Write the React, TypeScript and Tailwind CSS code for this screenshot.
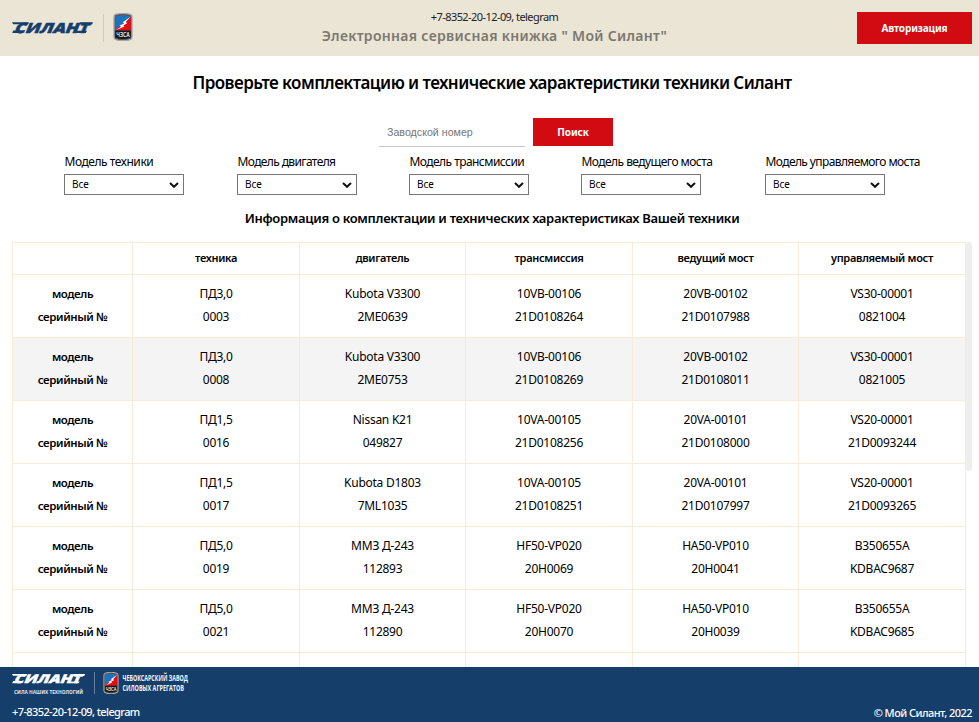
import React from 'react';

const columns = ['техника', 'двигатель', 'трансмиссия', 'ведущий мост', 'управляемый мост'];

const machines: [string, string][][] = [
  [['ПД3,0', '0003'], ['Kubota V3300', '2ME0639'], ['10VB-00106', '21D0108264'], ['20VB-00102', '21D0107988'], ['VS30-00001', '0821004']],
  [['ПД3,0', '0008'], ['Kubota V3300', '2ME0753'], ['10VB-00106', '21D0108269'], ['20VB-00102', '21D0108011'], ['VS30-00001', '0821005']],
  [['ПД1,5', '0016'], ['Nissan K21', '049827'], ['10VA-00105', '21D0108256'], ['20VA-00101', '21D0108000'], ['VS20-00001', '21D0093244']],
  [['ПД1,5', '0017'], ['Kubota D1803', '7ML1035'], ['10VA-00105', '21D0108251'], ['20VA-00101', '21D0107997'], ['VS20-00001', '21D0093265']],
  [['ПД5,0', '0019'], ['ММЗ Д-243', '112893'], ['HF50-VP020', '20H0069'], ['HA50-VP010', '20H0041'], ['B350655A', 'KDBAC9687']],
  [['ПД5,0', '0021'], ['ММЗ Д-243', '112890'], ['HF50-VP020', '20H0070'], ['HA50-VP010', '20H0039'], ['B350655A', 'KDBAC9685']],
];

const filters = [
  { label: 'Модель техники', width: 'w-[173px]', tracking: 'tracking-[-0.45px]' },
  { label: 'Модель двигателя', width: 'w-[172px]', tracking: 'tracking-[-0.62px]' },
  { label: 'Модель трансмиссии', width: 'w-[172px]', tracking: 'tracking-[-0.55px]' },
  { label: 'Модель ведущего моста', width: 'w-[184px]', tracking: 'tracking-[-0.55px]' },
  { label: 'Модель управляемого моста', width: 'w-[156px]', tracking: 'tracking-[-0.6px]' },
];

function Badge({ className }: { className: string }) {
  return (
    <svg viewBox="0 0 20 28" className={className}>
      <path d="M3.500 1.200Q10-.6 16.500 1.200Q19 1.500 19 4V24Q19 26.300 16.500 26.800Q10 28.600 3.500 26.800Q1 26.300 1 24V4Q1 1.500 3.500 1.200Z" fill="#555" stroke="#a5a8a8" strokeWidth="1.300" />
      <path d="M2.200 3.500Q10 .8 17.800 3.500V17.500H2.200Z" fill="#e30b17" />
      <path d="M2.200 3.500Q10 .8 17.800 3.500L2.200 17Z" fill="#1975bd" />
      <path d="M17.800 3.500L9.800 9.300L11.200 10.300L6.500 12.700L8 13.700L2.200 17.500L11.500 13.500L10.200 12.500L14.200 10.300L12.800 9.100Z" fill="#fff" />
      <path d="M2.200 17.500H17.800V24.500Q10 27.700 2.200 24.500Z" fill="#171918" />
      <text x="3.200" y="23.700" textLength="13.600" lengthAdjust="spacingAndGlyphs" fill="#fff" className="font-['Open_Sans',sans-serif] text-[6.500px] font-semibold">ЧЗСА</text>
    </svg>
  );
}

function Silant({ className }: { className: string }) {
  return (
    <svg viewBox="0 0 82 14" preserveAspectRatio="none" overflow="visible" className={className}>
      <g fill="currentColor" stroke="currentColor">
        <text x="0" y="0" transform="translate(1.500 11.600) skewX(-22)" textLength="74" lengthAdjust="spacingAndGlyphs" strokeWidth="0.500" className="font-['Open_Sans',sans-serif] text-[14px] font-extrabold">СИЛАНТ</text>
        <path d="M0 1.200H17L16 3.300H1.200Z M68 1.200H81L80 3.600H67Z M1.200 9.400H12L10.500 11.900H.3Z M65 9.800H75L73.800 11.900H64Z" strokeWidth="0" />
      </g>
    </svg>
  );
}

function Filter({ label, width, tracking }: { label: string; width: string; tracking: string }) {
  return (
    <div className={width}>
      <div className={`h-[18px] whitespace-nowrap pl-[0.5px] text-[12px] leading-[18px] ${tracking}`}>{label}</div>
      <div className="mt-[3px] flex h-[21px] w-[120px] items-center justify-between border border-[#767676] bg-white pl-[7px] pr-[4px] text-[10px] tracking-[-0.1px]">
        <span>Все</span>
        <svg viewBox="0 0 10 6" className="h-[6px] w-[10px]"><path d="M1 1L5 4.800L9 1" fill="none" stroke="#101010" strokeWidth="2" /></svg>
      </div>
    </div>
  );
}

export default function App() {
  return (
    <div className="flex h-[722px] w-[979px] flex-col overflow-hidden bg-white font-['Noto_Sans',sans-serif] text-black">
      <header className="flex h-[56px] shrink-0 items-start justify-between bg-[#ebe5d6] pl-[12px] pr-[7px]">
        <div className="flex w-[270px] pt-[13px]">
          <Silant className="mt-[8px] h-[14px] w-[82px] text-[#163e6c]" />
          <div className="ml-[9px] mt-px h-[28px] w-px bg-[#d0cdbf]" />
          <Badge className="ml-[9px] h-[28px] w-[20px]" />
        </div>
        <div className="flex flex-col items-center whitespace-nowrap pl-[5px] pt-[8px]">
          <div className="h-[18px] text-[11px] leading-[18px] tracking-[-0.57px] text-[#222]">+7-8352-20-12-09, telegram</div>
          <div className="text-[14px] font-semibold leading-[20px] tracking-[0.31px] text-[#7b786f]">Электронная сервисная книжка " Мой Силант"</div>
        </div>
        <div className="flex w-[270px] justify-end pt-[12px]">
          <button className="h-[32px] w-[115px] bg-[#d20a11] pt-px text-[10px] font-bold tracking-[-0.15px] text-white">Авторизация</button>
        </div>
      </header>
      <main className="flex min-h-0 flex-1 flex-col overflow-hidden">
        <h1 className="mt-[15px] h-[24px] shrink-0 whitespace-nowrap pl-[5px] text-center text-[17px] font-semibold leading-[24px] tracking-[-0.55px]">Проверьте комплектацию и технические характеристики техники Силант</h1>
        <div className="mt-[23px] flex h-[29px] shrink-0 pl-[379px]">
          <div className="h-[29px] w-[146px] border-b border-[#c8c8c8] pl-[8px] font-['Liberation_Sans',sans-serif] text-[10.670px] leading-[28px] text-[#757575]">Заводской номер</div>
          <button className="ml-[8px] h-[28px] w-[80px] bg-[#d20a11] pt-px text-[10px] font-bold tracking-[-0.1px] text-white">Поиск</button>
        </div>
        <div className="mt-[6px] flex h-[42px] shrink-0 pl-[64px]">
          {filters.map((f) => <Filter key={f.label} {...f} />)}
        </div>
        <h2 className="mt-[13px] h-[20px] shrink-0 whitespace-nowrap pl-[5px] text-center text-[13px] font-semibold leading-[20px] tracking-[-0.3px]">Информация о комплектации и технических характеристиках Вашей техники</h2>
        <div className="mt-[14px] flex min-h-0 flex-1 overflow-hidden pl-[12px]">
          <table className="h-[474px] w-[954px] shrink-0 table-fixed border-collapse text-center text-[12px] tracking-[-0.25px]">
            <colgroup>
              <col className="w-[120px]" /><col className="w-[167px]" /><col className="w-[166px]" /><col className="w-[167px]" /><col className="w-[166px]" /><col className="w-[167px]" />
            </colgroup>
            <thead>
              <tr className="h-[32px] text-[11px] tracking-[-0.3px]">
                <th className="border border-[#faebd7] p-0" />
                {columns.map((c) => <th key={c} className="border border-[#faebd7] p-0 pb-px font-semibold leading-[20px]">{c}</th>)}
              </tr>
            </thead>
            <tbody>
              {machines.map((m, i) => (
                <tr key={i} className={i === 1 ? 'h-[63px] bg-[#f4f4f4]' : 'h-[63px]'}>
                  <th className="border border-[#faebd7] p-0 pb-[2px] text-[11.500px] font-semibold leading-[23px] tracking-[-0.4px]"><div>модель</div><div>серийный №</div></th>
                  {m.map(([model, serial], j) => (
                    <td key={j} className="border border-[#faebd7] p-0 pb-[2px] leading-[23px]"><div>{model}</div><div>{serial}</div></td>
                  ))}
                </tr>
              ))}
              <tr className="h-[63px]">
                {[0, 1, 2, 3, 4, 5].map((k) => <td key={k} className="border border-[#faebd7] p-0" />)}
              </tr>
            </tbody>
          </table>
          <div className="h-[229px] w-[6px] rounded-[3px] bg-[#eee]" />
        </div>
      </main>
      <footer className="flex h-[55px] shrink-0 justify-between bg-[#163e6a] pl-[12px] pr-[7px] text-white">
        <div>
          <div className="flex h-[32px] pt-[5px]">
            <div className="w-[74px] pt-px">
              <Silant className="h-[12px] w-[74px] text-white" />
              <svg viewBox="0 0 74 8" overflow="visible" className="mt-[3px] h-[8px] w-[74px]"><text x="2" y="5.500" textLength="69" lengthAdjust="spacingAndGlyphs" fill="#dce4ee" className="text-[5px] font-bold">СИЛА НАШИХ ТЕХНОЛОГИЙ</text></svg>
            </div>
            <div className="ml-[8px] h-[22px] w-px bg-[#667f9d]" />
            <Badge className="ml-[8px] h-[22px] w-[16px]" />
            <svg viewBox="0 0 68 22" overflow="visible" className="ml-[3px] h-[22px] w-[68px]">
              <g fill="#f2f6fa" className="font-['Open_Sans',sans-serif] text-[8.500px] font-bold">
                <text x="0.500" y="9" textLength="65.500" lengthAdjust="spacingAndGlyphs">ЧЕБОКСАРСКИЙ ЗАВОД</text>
                <text x="0.500" y="18.700" textLength="61.500" lengthAdjust="spacingAndGlyphs">СИЛОВЫХ АГРЕГАТОВ</text>
              </g>
            </svg>
          </div>
          <div className="mt-[5px] text-[11px] font-medium leading-[16px] tracking-[-0.6px]">+7-8352-20-12-09, telegram</div>
        </div>
        <div className="whitespace-nowrap pt-[38px] text-[11px] font-medium leading-[16px] tracking-[-0.55px]">© Мой Силант, 2022</div>
      </footer>
    </div>
  );
}
